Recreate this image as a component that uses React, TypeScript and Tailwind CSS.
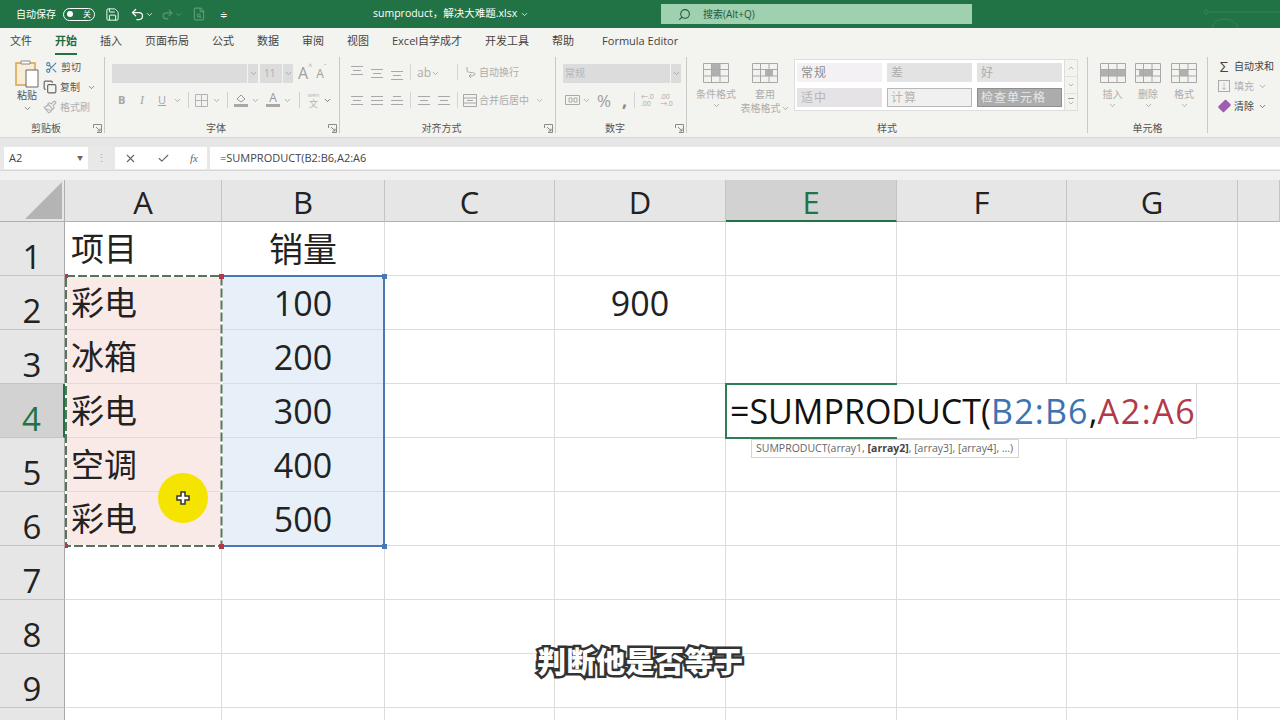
import React from "react";
import { Scissors, Copy, Paintbrush, Save, Undo2, Redo2, Search, X, Check, ChevronDown, FileSearch } from "lucide-react";

const COLS = ["A", "B", "C", "D", "E", "F", "G", ""];
const TABS = ["文件", "开始", "插入", "页面布局", "公式", "数据", "审阅", "视图", "Excel自学成才", "开发工具", "帮助", "Formula Editor"];
const ROWS: { n: number; a?: string; b?: string; d?: string }[] = [
  { n: 1, a: "项目", b: "销量" },
  { n: 2, a: "彩电", b: "100", d: "900" },
  { n: 3, a: "冰箱", b: "200" },
  { n: 4, a: "彩电", b: "300" },
  { n: 5, a: "空调", b: "400" },
  { n: 6, a: "彩电", b: "500" },
  { n: 7 },
  { n: 8 },
  { n: 9 },
  { n: 10 },
];

const Caret = ({ className = "text-[#9a9a9a]" }: { className?: string }) => (
  <ChevronDown size={9} strokeWidth={2} className={className} />
);

const Launcher = () => (
  <svg width="9" height="9" viewBox="0 0 9 9" className="text-[#8a8a8a]" fill="none" stroke="currentColor">
    <path d="M.5 4V.5H8.500V8.500H4M3 3l4 4M7 4.500V7H4.500" />
  </svg>
);

const AlignIcon = ({ w = [12, 8, 12], place = "self-center" }: { w?: number[]; place?: string }) => (
  <div className={`flex w-[14px] flex-col gap-[3px] ${place}`}>
    {w.map((x, i) => (
      <div key={i} className="mx-auto h-px bg-[#a8a8a8]" style={{ width: x }} />
    ))}
  </div>
);

const TableIcon = ({ fill = "M6 6h12v6H6z" }: { fill?: string }) => (
  <svg width="26" height="20" viewBox="0 0 26 20" fill="none" stroke="#a8a8a8">
    <path d={fill} fill="#b0b0b0" stroke="none" />
    <path d="M.5.500h25v19H.5zM.5 6.500h25M.5 13h25M8.500.500v19M17 .500v19" />
  </svg>
);

function Group({ width, label, launcher, children }: { width: string; label: string; launcher?: boolean; children: React.ReactNode }) {
  return (
    <div className={`relative flex h-full shrink-0 flex-col border-r border-[#c9c9c6] ${width}`}>
      <div className="flex-1">{children}</div>
      <div className={`h-[13px] text-center text-[10px] leading-[16px] text-[#555] ${launcher ? "pr-[12px]" : ""}`}>{label}</div>
      {launcher && (
        <div className="absolute right-[2px] bottom-0">
          <Launcher />
        </div>
      )}
    </div>
  );
}

function BigButton({ label, extra, icon, width }: { label: string; extra?: string; icon: React.ReactNode; width: string }) {
  return (
    <div className={`flex flex-col items-center pt-[5px] ${width}`}>
      <div className="flex h-[22px] items-center">{icon}</div>
      <span className="mt-[3px] text-[10px] leading-[14px] whitespace-nowrap text-[#adadad]">{label}</span>
      {extra ? (
        <span className="flex items-center text-[10px] leading-[14px] whitespace-nowrap text-[#adadad]">
          {extra}
          <Caret />
        </span>
      ) : (
        <Caret />
      )}
    </div>
  );
}

function ClipboardGroup() {
  return (
    <Group width="w-[105px]" label="剪贴板" launcher>
      <div className="flex pt-[2px] pl-[12px]">
        <div className="flex w-[30px] flex-col items-center">
          <svg width="24" height="29" viewBox="0 0 24 29" fill="none">
            <path d="M1 4h19v22H1z" fill="#f8edd6" stroke="#d9a24a" strokeWidth="1.500" />
            <path d="M6 5V2h9v3z" fill="#fff" stroke="#888" />
            <path d="M11 11h12v17H11z" fill="#fff" stroke="#666" />
          </svg>
          <span className="text-[10px] leading-[14px] text-[#555]">粘贴</span>
          <Caret className="mt-[2px] text-[#666]" />
        </div>
        <div className="ml-[1px] flex flex-col gap-[4px] text-[10px] text-[#555]">
          <div className="flex h-[16px] items-center gap-[3px] pl-[2px]">
            <Scissors size={13} className="text-[#4d7fa8]" />
            <span>剪切</span>
          </div>
          <div className="flex h-[16px] items-center gap-[3px]">
            <Copy size={14} className="text-[#666]" />
            <span>复制</span>
            <Caret className="ml-[4px] text-[#666]" />
          </div>
          <div className="flex h-[16px] items-center gap-[3px] text-[#b0b0b0]">
            <Paintbrush size={14} className="text-[#b5b5b5]" />
            <span>格式刷</span>
          </div>
        </div>
      </div>
    </Group>
  );
}

function FontGroup() {
  return (
    <Group width="w-[235px]" label="字体" launcher>
      <div className="flex h-[26px] items-end pl-[7px]">
        <div className="flex h-[19px] w-[146px] justify-end bg-[#dcdcdc]">
          <div className="flex w-[11px] items-center justify-center border-l border-[#f3f3ef]">
            <Caret />
          </div>
        </div>
        <div className="ml-[2px] flex h-[19px] w-[33px] items-center justify-between bg-[#dcdcdc] pl-[4px] text-[10px] text-[#adadad]">
          11
          <div className="flex h-full w-[11px] items-center justify-center border-l border-[#f3f3ef]">
            <Caret />
          </div>
        </div>
        <span className="ml-[5px] text-[16px] leading-[20px] text-[#a0a0a0]">A</span>
        <span className="self-start text-[7px] leading-[20px] text-[#a0a0a0]">^</span>
        <span className="ml-[4px] text-[12px] leading-[19px] text-[#a0a0a0]">A</span>
        <span className="self-start text-[7px] leading-[20px] text-[#a0a0a0]">ˇ</span>
      </div>
      <div className="mt-[7px] flex h-[20px] items-center pl-[13px] text-[#a5a5a5]">
        <span className="w-[20px] text-[11px] font-bold">B</span>
        <span className="w-[20px] pl-[2px] font-['Liberation_Serif'] text-[12px] italic">I</span>
        <span className="w-[15px] text-[11px] underline">U</span>
        <Caret />
        <div className="mx-[6px] h-[16px] w-px bg-[#d0d0d0]" />
        <svg width="13" height="13" viewBox="0 0 13 13" fill="none" stroke="#b4b4b4">
          <path d="M.5.500h12v12H.5zM.5 6.500h12M6.500.500v12" />
        </svg>
        <span className="ml-[4px]">
          <Caret />
        </span>
        <div className="mx-[6px] h-[16px] w-px bg-[#d0d0d0]" />
        <div className="flex w-[14px] flex-col items-center">
          <svg width="12" height="9" viewBox="0 0 12 9" fill="none" stroke="#999">
            <path d="M2 5l4-4 4 4-4 3z" />
          </svg>
          <div className="mt-[1px] h-[3px] w-[14px] bg-[#a8a8a8]" />
        </div>
        <span className="ml-[3px]">
          <Caret />
        </span>
        <div className="ml-[6px] flex w-[14px] flex-col items-center">
          <span className="text-[12px] leading-[10px] text-[#999]">A</span>
          <div className="mt-[1px] h-[3px] w-[14px] bg-[#a8a8a8]" />
        </div>
        <span className="ml-[3px]">
          <Caret />
        </span>
        <div className="mx-[7px] h-[16px] w-px bg-[#d0d0d0]" />
        <div className="flex w-[13px] flex-col items-center text-[#b5b5b5]">
          <span className="text-[6px] leading-[8px]">wén</span>
          <span className="text-[9px] leading-[10px]">文</span>
        </div>
        <Caret className="ml-[3px] text-[#555]" />
      </div>
    </Group>
  );
}

function AlignGroup() {
  return (
    <Group width="w-[216px]" label="对齐方式" launcher>
      <div className="flex h-[26px] items-end pb-[3px] pl-[10px] text-[10px] text-[#adadad]">
        <div className="flex h-[14px] w-[60px] gap-[6px]">
          <AlignIcon place="self-start" />
          <AlignIcon place="self-center" />
          <AlignIcon place="self-end" />
        </div>
        <div className="h-[16px] w-px bg-[#d5d5d5]" />
        <span className="ml-[6px] flex w-[40px] items-center text-[12px] leading-[14px]">
          ab
          <Caret />
        </span>
        <div className="h-[16px] w-px bg-[#d5d5d5]" />
        <svg width="12" height="14" viewBox="0 0 12 14" fill="none" stroke="#a8a8a8" className="ml-[7px]">
          <path d="M2 1v4c0 2 8 1 8 3s-4 2-6 2M6 8l-2 2 2 2" />
        </svg>
        <span className="ml-[2px]">自动换行</span>
      </div>
      <div className="mt-[7px] flex h-[20px] items-center pl-[10px] text-[10px] text-[#adadad]">
        <div className="flex w-[60px] gap-[6px]">
          <AlignIcon w={[12, 8, 12]} />
          <AlignIcon w={[12, 12, 12]} />
          <AlignIcon w={[8, 12, 12]} />
        </div>
        <div className="h-[16px] w-px bg-[#d5d5d5]" />
        <div className="ml-[6px] flex w-[40px] gap-[6px]">
          <AlignIcon />
          <AlignIcon />
        </div>
        <div className="h-[16px] w-px bg-[#d5d5d5]" />
        <svg width="14" height="13" viewBox="0 0 14 13" fill="none" stroke="#a8a8a8" className="ml-[5px]">
          <path d="M.5.500h13v12H.5zM.5 4h13M.5 9h13M4 6.500h6" />
        </svg>
        <span className="ml-[2px]">合并后居中</span>
        <Caret className="ml-[6px] text-[#a9a9a9]" />
      </div>
    </Group>
  );
}

function NumberGroup() {
  return (
    <Group width="w-[131px]" label="数字" launcher>
      <div className="flex h-[26px] items-end pl-[7px]">
        <div className="flex h-[19px] w-[118px] items-center justify-between bg-[#dcdcdc] pl-[2px] text-[10px] text-[#b5b5b5]">
          常规
          <div className="flex h-full w-[11px] items-center justify-center border-l border-[#f3f3ef]">
            <Caret />
          </div>
        </div>
      </div>
      <div className="mt-[7px] flex h-[20px] items-center pl-[9px] text-[#9f9f9f]">
        <svg width="15" height="12" viewBox="0 0 15 12" fill="none" stroke="#aaa">
          <path d="M.5 1.500h14v9H.5zM4 4h3v4H4zM9 4h3v4H9z" />
        </svg>
        <Caret className="ml-[2px]" />
        <span className="ml-[6px] w-[18px] text-[17px] leading-none">%</span>
        <span className="ml-[7px] w-[8px] text-[18px] leading-[12px] font-bold text-[#888]">,</span>
        <div className="mr-[6px] ml-[4px] h-[16px] w-px bg-[#d5d5d5]" />
        <span className="w-[19px] text-[7px] leading-[7px] text-[#aaa]">←.0 .00</span>
        <span className="w-[16px] text-[7px] leading-[7px] text-[#aaa]">.00 →.0</span>
      </div>
    </Group>
  );
}

function StylesGroup() {
  return (
    <Group width="w-[401px]" label="样式">
      <div className="flex">
        <BigButton width="ml-[2px] w-[54px]" label="条件格式" icon={<TableIcon fill="M9 7h8v6H9zM9 1h8v6H9z" />} />
        <BigButton width="w-[44px]" label="套用" extra="表格格式" icon={<TableIcon fill="M13 7h8v6h-8z" />} />
        <div className="mt-[2px] ml-[7px] flex">
          <div className="h-[52px] w-[271px] border border-[#dedede] bg-white">
            <div className="grid grid-cols-[85px_85px_85px] grid-rows-[19px_19px] gap-x-[5px] gap-y-[6px] pt-[3px] pl-[2px] text-[12px] tracking-[1px]">
              <div className="flex items-center bg-[#f4f1f4] pl-[4px] text-[#8f8f8f]">常规</div>
              <div className="flex items-center bg-[#e3e3e3] pl-[4px] text-[#adadad]">差</div>
              <div className="flex items-center bg-[#e3e3e3] pl-[4px] text-[#adadad]">好</div>
              <div className="flex items-center bg-[#e6e3e6] pl-[4px] text-[#b5b5b5]">适中</div>
              <div className="flex items-center border border-[#b8b8b8] bg-[#f0f0f0] pl-[3px] text-[#b5b5b5]">计算</div>
              <div className="flex items-center border border-[#8e8e8e] bg-[#acacac] pl-[3px] text-[#e8e8e8]">检查单元格</div>
            </div>
          </div>
          <div className="flex h-[52px] w-[13px] flex-col items-center border border-l-0 border-[#dedede] bg-[#f3f3ef] text-[#999]">
            <div className="flex h-[17px] w-full items-center justify-center border-b border-[#e0e0e0]">
              <ChevronDown size={8} className="rotate-180" />
            </div>
            <div className="flex h-[17px] w-full items-center justify-center border-b border-[#e0e0e0]">
              <ChevronDown size={8} />
            </div>
            <div className="flex flex-1 flex-col items-center justify-center">
              <div className="h-px w-[6px] bg-[#999]" />
              <ChevronDown size={8} />
            </div>
          </div>
        </div>
      </div>
    </Group>
  );
}

function CellsGroup() {
  return (
    <Group width="w-[120px]" label="单元格">
      <div className="flex pl-[7px]">
        <BigButton width="w-[35px]" label="插入" icon={<TableIcon fill="M1 7h24v6H1z" />} />
        <BigButton width="w-[36px]" label="删除" icon={<TableIcon fill="M4 7h14v6H4z" />} />
        <BigButton width="w-[36px]" label="格式" icon={<TableIcon fill="M9 7h8v6H9z" />} />
      </div>
    </Group>
  );
}

function EditGroup() {
  return (
    <div className="flex flex-col gap-[4px] pt-[1px] pl-[10px] text-[10px] leading-[16px] text-[#444]">
      <div className="flex items-center gap-[4px]">
        <span className="w-[12px] text-center text-[15px] leading-[16px]">Σ</span>
        <span className="whitespace-nowrap">自动求和</span>
      </div>
      <div className="flex items-center gap-[4px] text-[#b0b0b0]">
        <div className="flex h-[12px] w-[12px] items-center justify-center border border-[#aaa] text-[8px] leading-none">↓</div>
        <span>填充</span>
        <Caret />
      </div>
      <div className="flex items-center gap-[4px]">
        <div className="ml-px h-[8px] w-[11px] -rotate-45 rounded-[1px] bg-[#a05cb0]" />
        <span>清除</span>
        <Caret className="text-[#555]" />
      </div>
    </div>
  );
}

function TitleBar() {
  return (
    <div className="relative flex h-[28px] items-center overflow-hidden bg-[#217346] text-white">
      <span className="ml-[16px] text-[10px]">自动保存</span>
      <div className="ml-[7px] flex h-[13px] w-[32px] items-center justify-between rounded-full border border-white px-[3px] text-[8px]">
        <div className="h-[6px] w-[6px] rounded-full bg-white" />
        <span>关</span>
      </div>
      <Save size={15} strokeWidth={1.5} className="ml-[10px]" />
      <Undo2 size={15} className="ml-[10px]" />
      <Caret className="text-white" />
      <Redo2 size={13} className="ml-[7px] text-[#5b9a78]" />
      <Caret className="text-[#5b9a78]" />
      <FileSearch size={14} className="ml-[9px] text-[#5b9a78]" />
      <span className="ml-[14px] text-[9px] leading-none">≑</span>
      <div className="ml-[145px] flex w-[153px] items-center gap-[3px] text-[10.500px]">
        <span className="whitespace-nowrap">sumproduct，解决大难题.xlsx</span>
        <Caret className="shrink-0 text-white" />
      </div>
      <div className="ml-[135px] flex h-[20px] w-[311px] items-center bg-[#9fd0b0] pl-[17px] text-[10px] text-[#1e5a3a]">
        <Search size={13} className="-scale-x-100" />
        <span className="ml-[12px]">搜索(Alt+Q)</span>
      </div>
      <svg width="80" height="28" viewBox="0 0 80 28" fill="none" stroke="#3a8159" className="absolute top-0 right-0">
        <circle cx="6" cy="12" r="2" />
        <path d="M8 12h72M12 28c2-12 22-12 26 0" />
      </svg>
    </div>
  );
}

function TabRow() {
  return (
    <div className="flex h-[27px] items-center gap-[23px] bg-[#f3f3ef] pl-[10px] text-[11px] text-[#444]">
      {TABS.map((t) => (
        <div key={t} className={`relative whitespace-nowrap ${t === "开始" ? "font-bold text-[#1f6b41]" : ""} ${t === "Formula Editor" ? "ml-[5px]" : ""}`}>
          {t}
          {t === "开始" && <div className="absolute right-0 -bottom-[5px] left-0 h-[2px] bg-[#217346]" />}
        </div>
      ))}
    </div>
  );
}

function FormulaBar() {
  return (
    <div className="flex h-[34px] flex-col bg-[#e8e8e8]">
      <div className="flex h-[23px] pt-px pl-[4px] text-[11px] text-[#444]">
        <div className="flex h-[22px] w-[84px] items-center justify-between bg-white px-[5px]">
          A2
          <span className="text-[6px] text-[#666]">▼</span>
        </div>
        <div className="flex w-[27px] items-center justify-center text-[#aaa]">⋮</div>
        <div className="flex h-[22px] w-[92px] items-center justify-between bg-white px-[9px] text-[#666]">
          <X size={13} />
          <Check size={13} />
          <span className="font-['Liberation_Serif'] text-[11px] italic">fx</span>
        </div>
        <div className="ml-[3px] flex h-[22px] flex-1 items-center bg-white pl-[10px]">=SUMPRODUCT(B2:B6,A2:A6</div>
      </div>
      <div className="mt-[1px] flex-1 border-t border-[#d8d8d8] bg-[#f1f1f1]" />
    </div>
  );
}

function Sheet() {
  return (
    <div className="grid grid-cols-[65px_157px_163px_170px_171px_171px_170px_171px_42px] grid-rows-[42px_repeat(10,54px)] text-[33px] leading-none text-[#222]">
      <div className="flex items-end justify-end border-r border-b border-[#b0b0b0] bg-[#e6e6e6] pr-[2px] pb-[2px]">
        <svg width="37" height="37" viewBox="0 0 37 37">
          <path d="M37 0v37H0z" fill="#b4b4b4" />
        </svg>
      </div>
      {COLS.map((c, i) => (
        <div
          key={i}
          className={`flex items-center justify-center border-r border-b pt-[4px] text-[31px] ${
            c === "E" ? "border-b-2 border-r-[#c4c4c4] border-b-[#217346] bg-[#d2d2d2] text-[#217346]" : "border-r-[#c4c4c4] border-b-[#b0b0b0] bg-[#e6e6e6] text-[#222]"
          }`}
        >
          {c}
        </div>
      ))}
      {ROWS.map((r) => (
        <React.Fragment key={r.n}>
          <div
            className={`flex items-end justify-center border-b border-[#c4c4c4] pb-[2px] text-[33px] ${
              r.n === 4 ? "border-r-2 border-r-[#217346] bg-[#d2d2d2] text-[#217346]" : "border-r border-r-[#a8a8a8] bg-[#e6e6e6]"
            }`}
          >
            {r.n < 10 ? r.n : ""}
          </div>
          <div className={`flex items-center border-r border-b border-[#dcdcdc] pl-[6px] ${r.n >= 2 && r.n <= 6 ? "bg-[#f9e9e7]" : ""}`}>{r.a}</div>
          <div className={`flex items-center justify-center border-r border-b border-[#dcdcdc] text-[34px] ${r.n >= 2 && r.n <= 6 ? "bg-[#e7eff8]" : ""}`}>{r.b}</div>
          <div className="border-r border-b border-[#dcdcdc]" />
          <div className="flex items-center justify-center border-r border-b border-[#dcdcdc] text-[34px]">{r.d}</div>
          <div className="border-r border-b border-[#dcdcdc]" />
          <div className="border-r border-b border-[#dcdcdc]" />
          <div className="border-r border-b border-[#dcdcdc]" />
          <div className="border-b border-[#dcdcdc]" />
        </React.Fragment>
      ))}
    </div>
  );
}

export default function App() {
  return (
    <div className="relative h-[720px] w-[1280px] overflow-hidden bg-white font-['Open_Sans','Noto_Sans_CJK_SC',sans-serif]">
      <TitleBar />
      <TabRow />
      <div className="flex h-[82px] bg-[#f3f3ef] pt-[2px] pb-[4px]">
        <ClipboardGroup />
        <FontGroup />
        <AlignGroup />
        <NumberGroup />
        <StylesGroup />
        <CellsGroup />
        <EditGroup />
      </div>
      <div className="h-[9px] border-t border-[#d8d8d8] bg-[#e6e6e6]" />
      <FormulaBar />
      <Sheet />

      {/* B2:B6 reference box */}
      <div className="absolute top-[275px] left-[222px] h-[272px] w-[163px] border-y-2 border-r-2 border-[#4a78b5]" />
      {/* marching ants on A2:A6 */}
      <svg width="160" height="274" viewBox="0 0 160 274" fill="none" className="absolute top-[274px] left-[64px]">
        <rect x="2" y="2" width="155.500" height="270" stroke="#fff" strokeWidth="2" />
        <rect x="2" y="2" width="155.500" height="270" stroke="#56755c" strokeWidth="2" strokeDasharray="9 3" />
      </svg>
      <div className="absolute top-[274px] left-[219px] h-[5px] w-[5px] bg-[#b5384a]" />
      <div className="absolute top-[544px] left-[219px] h-[5px] w-[5px] bg-[#b5384a]" />
      <div className="absolute top-[274px] left-[65px] h-[4px] w-[3px] bg-[#b5384a]" />
      <div className="absolute top-[544px] left-[65px] h-[4px] w-[3px] bg-[#b5384a]" />
      <div className="absolute top-[274px] left-[382px] h-[5px] w-[5px] bg-[#4a78b5]" />
      <div className="absolute top-[544px] left-[382px] h-[5px] w-[5px] bg-[#4a78b5]" />

      {/* in-cell editor */}
      <div className="absolute top-[383px] left-[725px] flex h-[56px] w-[472px] items-center border-y border-r border-[#d8d8d8] bg-white pl-[5px] text-[34px] whitespace-nowrap text-[#111]">
        <span>=SUMPRODUCT(</span>
        <span className="tracking-[1.200px] text-[#3f72b0]">B2:B6</span>
        <span>,</span>
        <span className="tracking-[1.600px] text-[#b23a48]">A2:A6</span>
      </div>
      <div className="absolute top-[383px] left-[725px] h-[56px] w-[172px] border-2 border-r-0 border-[#2f7d55]" />
      <div className="absolute top-[439px] left-[751px] flex h-[19px] w-[268px] items-center border border-[#d4d4d4] bg-white pl-[4px] text-[10.500px] whitespace-nowrap text-[#666]">
        SUMPRODUCT(array1,&nbsp;<b className="text-[#444]">[array2]</b>, [array3], [array4], ...)
      </div>

      {/* cursor highlight */}
      <div className="absolute top-[473px] left-[158px] flex h-[50px] w-[50px] items-center justify-center rounded-full bg-[#f5e400]">
        <svg width="14" height="14" viewBox="0 0 14 14">
          <path d="M5 1h4v4h4v4H9v4H5V9H1V5h4z" fill="#fff" stroke="#333" strokeWidth="1.500" />
        </svg>
      </div>

      {/* subtitle */}
      <div className="absolute top-[642px] left-[537px] text-[29px] leading-[40px] font-black tracking-[.5px] whitespace-nowrap text-white [-webkit-text-stroke:5px_#333] [paint-order:stroke_fill]">
        判断他是否等于
      </div>
    </div>
  );
}
